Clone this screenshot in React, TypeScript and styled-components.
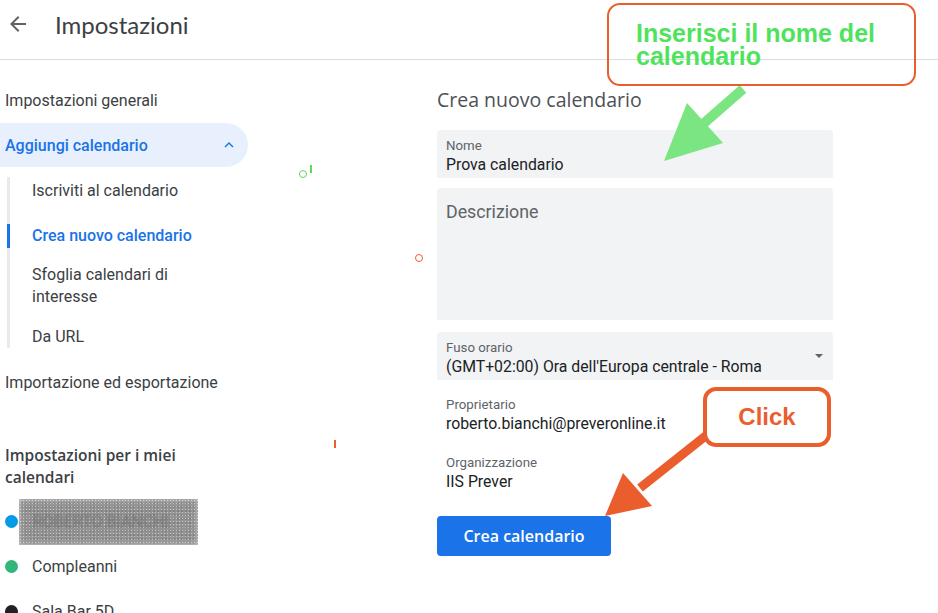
import React from "react";
import styled, { createGlobalStyle } from "styled-components";

const Global = createGlobalStyle`
  html, body {
    margin: 0;
    padding: 0;
    background: #fff;
  }
  body {
    font-family: Roboto, "Liberation Sans", Arial, sans-serif;
    color: #3c4043;
  }
`;

const color = {
  text: "#3c4043",
  sub: "#5f6368",
  dark: "#202124",
  blue: "#1a73e8",
  blueBg: "#e8f0fe",
  line: "#dadce0",
  field: "#f1f3f4",
  green: "#4fe35d",
  greenArrow: "#7be582",
  orange: "#ea5e2d",
};

const Screen = styled.div`
  position: relative;
  width: 938px;
  height: 613px;
  overflow: hidden;
`;

const Header = styled.header`
  display: flex;
  align-items: center;
  height: 48px;
  padding: 0 0 11px 6px;
  border-bottom: 1px solid ${color.line};
`;

const BackButton = styled.div`
  display: flex;
  width: 24px;
  height: 24px;
  margin-right: 25px;
  color: ${color.sub};
`;

const HeaderTitle = styled.h1`
  margin: 0;
  font-family: Lato, "Open Sans", sans-serif;
  font-size: 24px;
  font-weight: 400;
  color: ${color.text};
`;

const Body = styled.div`
  display: flex;
`;

const Nav = styled.nav`
  display: flex;
  flex-direction: column;
  flex: 0 0 248px;
  padding-top: 18px;
`;

const NavItem = styled.div<{ $gap?: number }>`
  display: flex;
  align-items: center;
  height: 45px;
  margin-top: ${(p) => p.$gap ?? 0}px;
  padding-left: 5px;
  font-size: 16px;
  color: ${color.text};
`;

const NavGroup = styled.div`
  display: flex;
  align-items: center;
  justify-content: space-between;
  height: 44px;
  padding-left: 5px;
  border-radius: 0 22px 22px 0;
  background: ${color.blueBg};
  color: ${color.blue};
  font-size: 16px;
  font-weight: 500;
`;

const Chevron = styled.div`
  display: flex;
  width: 18px;
  height: 18px;
  margin-right: 10px;
`;

const SubList = styled.div`
  position: relative;
  display: flex;
  flex-direction: column;
  margin-left: 7px;
  padding-top: 1px;

  &::before {
    content: "";
    position: absolute;
    left: 0;
    top: 10px;
    bottom: 11px;
    width: 3px;
    background: #e8eaed;
  }
`;

const SubItem = styled.div<{ $active?: boolean; $wrap?: boolean }>`
  position: relative;
  display: flex;
  align-items: center;
  min-height: 45px;
  box-sizing: border-box;
  padding: ${(p) => (p.$wrap ? "6px 0 6px 25px" : "0 0 0 25px")};
  max-width: ${(p) => (p.$wrap ? "180px" : "none")};
  font-size: 16px;
  line-height: 22px;
  font-weight: ${(p) => (p.$active ? 500 : 400)};
  color: ${(p) => (p.$active ? color.blue : color.text)};

  &::before {
    content: "";
    display: ${(p) => (p.$active ? "block" : "none")};
    position: absolute;
    left: 0;
    top: 50%;
    width: 3px;
    height: 24px;
    transform: translateY(-50%);
    background: ${color.blue};
  }
`;

const NavHeading = styled.h3`
  margin: 39px 0 11px;
  padding-left: 5px;
  max-width: 205px;
  font-family: "Open Sans", Lato, sans-serif;
  font-size: 15.5px;
  font-weight: 600;
  line-height: 22px;
  color: ${color.text};
`;

const CalItem = styled.div`
  display: flex;
  align-items: center;
  height: 45px;
  padding-left: 5px;
  font-size: 16px;
  color: ${color.text};
`;

const Dot = styled.span<{ $color: string; $gap?: number }>`
  flex: 0 0 13px;
  height: 13px;
  margin-right: ${(p) => p.$gap ?? 14}px;
  border-radius: 50%;
  background: ${(p) => p.$color};
`;

const Redacted = styled.div`
  display: flex;
  align-items: center;
  width: 179px;
  height: 46px;
  margin-left: 1px;
  padding-left: 14px;
  box-sizing: border-box;
  background-color: #939393;
  background-image: radial-gradient(rgba(255, 255, 255, 0.5) 0.6px, transparent 1px),
    radial-gradient(rgba(70, 70, 70, 0.3) 0.6px, transparent 1px);
  background-size: 3px 3px, 4px 4px;
  background-position: 0 0, 1px 2px;
  box-shadow: inset 0 0 6px rgba(255, 255, 255, 0.55);
  overflow: hidden;
`;

const RedactedText = styled.span`
  font-size: 16px;
  color: #747474;
  filter: blur(1.2px);
  white-space: nowrap;
`;

const Main = styled.main`
  display: flex;
  flex-direction: column;
  align-items: flex-start;
  flex: 0 0 396px;
  margin-left: 189px;
  padding-top: 28px;
`;

const FormTitle = styled.h2`
  margin: 0 0 18px;
  font-family: "Open Sans", Lato, sans-serif;
  font-size: 19.5px;
  font-weight: 400;
  line-height: 24px;
  color: #4d5156;
`;

const Field = styled.div<{ $filled?: boolean; $gap?: number; $tall?: boolean }>`
  position: relative;
  align-self: stretch;
  box-sizing: border-box;
  height: ${(p) => (p.$tall ? 132 : 48)}px;
  margin-bottom: ${(p) => p.$gap ?? 0}px;
  padding: 8px 9px 3px;
  border-radius: 4px 4px 0 0;
  background: ${(p) => (p.$filled ? color.field : "transparent")};
`;

const FieldLabel = styled.div`
  font-size: 13.3px;
  line-height: 15px;
  color: ${color.sub};
`;

const FieldValue = styled.div`
  font-size: 15.8px;
  line-height: 23px;
  color: ${color.dark};
`;

const Placeholder = styled.div`
  padding-top: 4px;
  font-size: 17.8px;
  line-height: 24px;
  color: ${color.sub};
`;

const Caret = styled.span`
  position: absolute;
  right: 10px;
  top: 22px;
  border-left: 4px solid transparent;
  border-right: 4px solid transparent;
  border-top: 4px solid ${color.sub};
`;

const PrimaryButton = styled.button`
  margin-top: 21px;
  width: 174px;
  height: 40px;
  border: 0;
  border-radius: 4px;
  background: ${color.blue};
  color: #fff;
  font-family: "Open Sans", Lato, sans-serif;
  font-size: 16px;
  font-weight: 600;
  cursor: pointer;
`;

/* screenshot annotations drawn over the page */
const Overlay = styled.svg`
  position: absolute;
  left: 0;
  top: 0;
  pointer-events: none;
`;

const Callout = styled.div<{ $x: number; $y: number; $w: number; $h: number; $border: number }>`
  position: absolute;
  left: ${(p) => p.$x}px;
  top: ${(p) => p.$y}px;
  width: ${(p) => p.$w}px;
  height: ${(p) => p.$h}px;
  box-sizing: border-box;
  border: ${(p) => p.$border}px solid ${color.orange};
  border-radius: 13px;
  font-family: "Liberation Sans", Arial, sans-serif;
  font-weight: 700;
`;

const NameHint = styled(Callout)`
  padding: 17px 0 0 27px;
  background: transparent;
  color: ${color.green};
  font-size: 25px;
  line-height: 23px;
`;

const ClickHint = styled(Callout)`
  display: flex;
  align-items: center;
  justify-content: center;
  background: #fff;
  color: ${color.orange};
  font-size: 24px;
`;

const Mark = styled.span<{ $x: number; $y: number; $c: string; $round?: boolean }>`
  position: absolute;
  left: ${(p) => p.$x}px;
  top: ${(p) => p.$y}px;
  width: ${(p) => (p.$round ? 8 : 2)}px;
  height: 8px;
  box-sizing: border-box;
  border-radius: ${(p) => (p.$round ? "50%" : "0")};
  border: ${(p) => (p.$round ? `1px solid ${p.$c}` : "0")};
  background: ${(p) => (p.$round ? "transparent" : p.$c)};
`;

function ArrowBack() {
  return (
    <svg viewBox="0 0 24 24" width="24" height="24" fill="currentColor">
      <path d="M20 11H7.83l5.59-5.59L12 4l-8 8 8 8 1.41-1.41L7.83 13H20v-2z" />
    </svg>
  );
}

function ExpandLess() {
  return (
    <svg viewBox="0 0 24 24" width="18" height="18" fill="currentColor">
      <path d="M12 8l-6 6 1.41 1.41L12 10.83l4.59 4.58L18 14z" />
    </svg>
  );
}

const subItems = [
  { label: "Iscriviti al calendario" },
  { label: "Crea nuovo calendario", active: true },
  { label: "Sfoglia calendari di interesse", wrap: true },
  { label: "Da URL" },
];

export default function App() {
  return (
    <Screen>
      <Global />
      <Header>
        <BackButton>
          <ArrowBack />
        </BackButton>
        <HeaderTitle>Impostazioni</HeaderTitle>
      </Header>

      <Body>
        <Nav>
          <NavItem>Impostazioni generali</NavItem>
          <NavGroup>
            Aggiungi calendario
            <Chevron>
              <ExpandLess />
            </Chevron>
          </NavGroup>
          <SubList>
            {subItems.map((item) => (
              <SubItem key={item.label} $active={item.active} $wrap={item.wrap}>
                {item.label}
              </SubItem>
            ))}
          </SubList>
          <NavItem $gap={1}>Importazione ed esportazione</NavItem>
          <NavHeading>Impostazioni per i miei calendari</NavHeading>
          <CalItem>
            <Dot $color="#039be5" $gap={0} />
            <Redacted>
              <RedactedText>ROBERTO BIANCHI</RedactedText>
            </Redacted>
          </CalItem>
          <CalItem>
            <Dot $color="#33b679" />
            Compleanni
          </CalItem>
          <CalItem>
            <Dot $color="#202124" />
            Sala Bar 5D
          </CalItem>
        </Nav>

        <Main>
          <FormTitle>Crea nuovo calendario</FormTitle>
          <Field $filled $gap={10}>
            <FieldLabel>Nome</FieldLabel>
            <FieldValue>Prova calendario</FieldValue>
          </Field>
          <Field $filled $tall $gap={12}>
            <Placeholder>Descrizione</Placeholder>
          </Field>
          <Field $filled $gap={9}>
            <FieldLabel>Fuso orario</FieldLabel>
            <FieldValue>(GMT+02:00) Ora dell'Europa centrale - Roma</FieldValue>
            <Caret />
          </Field>
          <Field $gap={10}>
            <FieldLabel>Proprietario</FieldLabel>
            <FieldValue>roberto.bianchi@preveronline.it</FieldValue>
          </Field>
          <Field>
            <FieldLabel>Organizzazione</FieldLabel>
            <FieldValue>IIS Prever</FieldValue>
          </Field>
          <PrimaryButton>Crea calendario</PrimaryButton>
        </Main>
      </Body>

      <Overlay width="938" height="613" viewBox="0 0 938 613">
        <line x1="743" y1="89" x2="703" y2="124" stroke={color.greenArrow} strokeWidth="10" />
        <polygon points="687,103 664,161 723,143" fill={color.greenArrow} />
        <line x1="708" y1="434" x2="640" y2="488" stroke={color.orange} strokeWidth="9" />
        <polygon points="623,473 605,516 652,506" fill={color.orange} />
      </Overlay>

      <NameHint $x={607} $y={3} $w={309} $h={83} $border={2}>
        Inserisci il nome del
        <br />
        calendario
      </NameHint>
      <ClickHint $x={703} $y={387} $w={128} $h={60} $border={4}>
        Click
      </ClickHint>

      <Mark $x={299} $y={170} $c="#5fd85a" $round />
      <Mark $x={310} $y={165} $c="#5fd85a" />
      <Mark $x={415} $y={254} $c={color.orange} $round />
      <Mark $x={334} $y={440} $c={color.orange} />
    </Screen>
  );
}
